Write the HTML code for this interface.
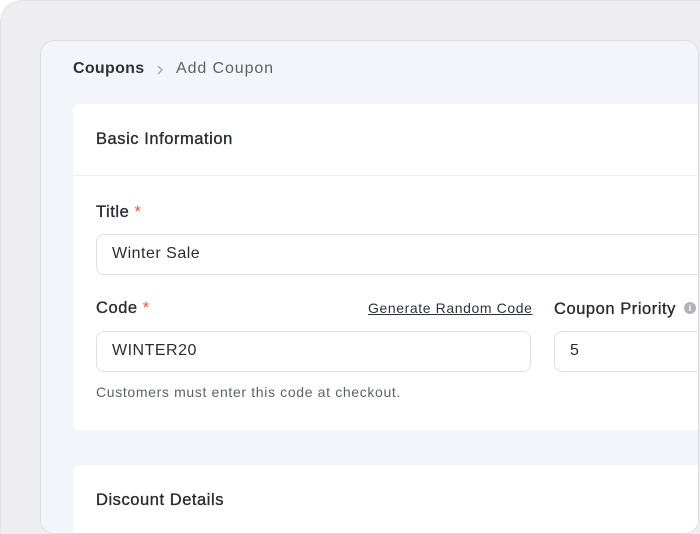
<!DOCTYPE html>
<html style="overflow:hidden;width:700px;height:534px"><head><style>
body{margin:0;width:700px;height:534px;overflow:hidden;background:#fff;font-family:"Liberation Sans",sans-serif;position:relative}
.outer{position:absolute;left:0;top:0;width:699px;height:533px;background:#eeeef0;border-radius:22px 0 0 0;border-top:1px solid #e4e4e7;border-left:1px solid #e4e4e7}
.panel{position:absolute;left:40px;top:40px;width:657px;height:492px;background:#f4f5fa;border:1px solid #dcdde2;border-radius:14px;overflow:hidden}
.card{position:absolute;background:#fff;border-radius:8px 0 0 8px}
.t{position:absolute;white-space:nowrap}
.lbl{font-size:16.5px;color:#2a2d34;letter-spacing:.55px;-webkit-text-stroke:.35px #2a2d34}
.star{color:#e05a4a;-webkit-text-stroke:0}
.inp{position:absolute;background:#fff;border:1px solid #dfe0e4;border-radius:8px;height:41px;box-sizing:border-box;font-size:16px;color:#2a2d34;padding:10px 15px;letter-spacing:.5px}
</style></head><body>
<div class="outer"></div>
<div class="panel">
<div class="card" style="left:32px;top:63px;width:625px;height:326px"></div>
<div class="card" style="left:32px;top:424px;width:625px;height:68px;border-radius:8px 0 0 0"></div>
</div>
<div class="t" style="left:73px;top:60px;font-size:16px;font-weight:bold;color:#2f323a;letter-spacing:.3px">Coupons</div>
<svg class="t" style="left:155px;top:64px" width="10" height="12"><path d="M3 2l4 4-4 4" fill="none" stroke="#a0a3aa" stroke-width="1.3"/></svg>
<div class="t" style="left:176px;top:60px;font-size:16px;color:#5d616a;letter-spacing:.9px">Add Coupon</div>
<div class="t lbl" style="left:96px;top:130px">Basic Information</div>
<div style="position:absolute;left:73px;top:175px;width:624px;height:1px;background:#eeeff2"></div>
<div class="t lbl" style="left:96px;top:203px">Title <span class="star">*</span></div>
<div class="inp" style="left:96px;top:234px;width:601px;border-right:none;border-radius:8px 0 0 8px">Winter Sale</div>
<div class="t lbl" style="left:96px;top:299px">Code <span class="star">*</span></div>
<div class="t" style="left:368px;top:300px;font-size:14px;color:#2f323a;text-decoration:underline;letter-spacing:.6px">Generate Random Code</div>
<div class="t lbl" style="left:554px;top:300px">Coupon Priority</div>
<div class="t" style="left:684px;top:302px;width:12px;height:12px;border-radius:50%;background:#b0b3ba;color:#fff;font-size:9px;text-align:center;line-height:12px;font-weight:bold">i</div>
<div class="inp" style="left:96px;top:331px;width:435px">WINTER20</div>
<div class="inp" style="left:554px;top:331px;width:143px;border-right:none;border-radius:8px 0 0 8px">5</div>
<div class="t" style="left:96px;top:384px;font-size:14px;color:#5d616a;letter-spacing:.65px">Customers must enter this code at checkout.</div>
<div class="t lbl" style="left:96px;top:491px">Discount Details</div>
</body></html>
